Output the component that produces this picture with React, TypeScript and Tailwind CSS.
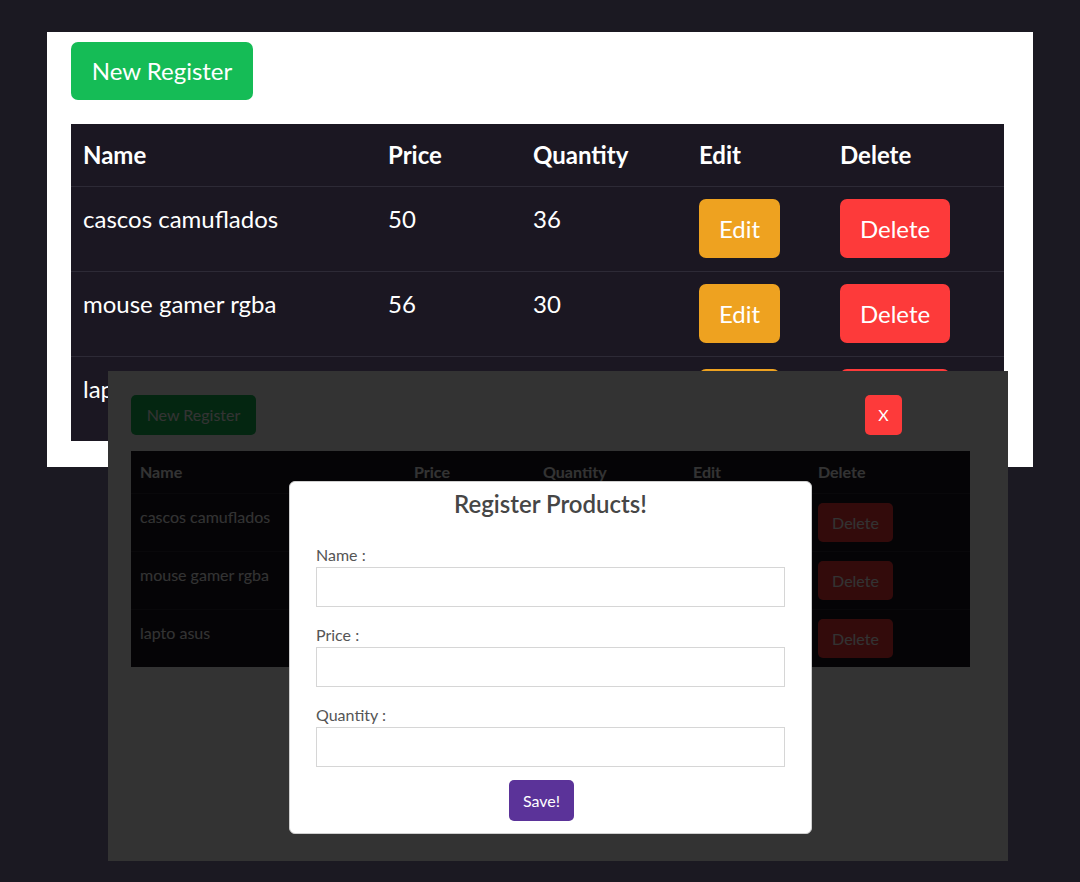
const products = [
  { name: "cascos camuflados", price: 50, quantity: 36 },
  { name: "mouse gamer rgba", price: 56, quantity: 30 },
  { name: "lapto asus", price: 35, quantity: 12 },
];

function BigTable() {
  return (
    <div className="mt-[24px] w-[933px] bg-[#1b1722] text-white">
      <div className="grid grid-cols-[305px_145px_166px_141px_176px] h-[62px] items-center text-[24px] font-bold">
        <div className="px-[12px]">Name</div>
        <div className="px-[12px]">Price</div>
        <div className="px-[12px]">Quantity</div>
        <div className="px-[12px]">Edit</div>
        <div className="px-[12px]">Delete</div>
      </div>
      {products.map((p) => (
        <div
          key={p.name}
          className="grid grid-cols-[305px_145px_166px_141px_176px] h-[85px] items-start pt-[12px] border-t border-[#2d2a36] text-[24px]"
        >
          <div className="px-[12px] leading-[40px]">{p.name}</div>
          <div className="px-[12px] leading-[40px]">{p.price}</div>
          <div className="px-[12px] leading-[40px]">{p.quantity}</div>
          <div className="px-[12px]">
            <button className="w-[81px] h-[59px] rounded-[7px] bg-[#eea220] text-white">Edit</button>
          </div>
          <div className="px-[12px]">
            <button className="w-[110px] h-[59px] rounded-[7px] bg-[#fd3a3a] text-white">Delete</button>
          </div>
        </div>
      ))}
    </div>
  );
}

function SmallTable() {
  return (
    <div className="mt-[16px] w-[839px] bg-[#1b1722] text-white">
      <div className="grid grid-cols-[275px_129px_150px_125px_160px] h-[42px] items-center text-[16px] font-bold">
        <div className="px-[9px]">Name</div>
        <div className="px-[8px]">Price</div>
        <div className="px-[8px]">Quantity</div>
        <div className="px-[8px]">Edit</div>
        <div className="px-[8px]">Delete</div>
      </div>
      {products.map((p) => (
        <div
          key={p.name}
          className="grid grid-cols-[275px_129px_150px_125px_160px] h-[58px] items-start pt-[9px] border-t border-[#2d2a36] text-[16px]"
        >
          <div className="px-[9px] leading-[28px]">{p.name}</div>
          <div className="px-[8px] leading-[28px]">{p.price}</div>
          <div className="px-[8px] leading-[28px]">{p.quantity}</div>
          <div className="px-[8px]">
            <button className="w-[55px] h-[39px] rounded-[5px] bg-[#eea220] text-white">Edit</button>
          </div>
          <div className="px-[8px]">
            <button className="w-[75px] h-[39px] rounded-[5px] bg-[#fd3a3a] text-white">Delete</button>
          </div>
        </div>
      ))}
    </div>
  );
}

function Field({ label }: { label: string }) {
  return (
    <div className="mt-[16px] first:mt-0">
      <div className="text-[16px] leading-[24px] text-[#555555]">{label}</div>
      <input className="w-[469px] h-[40px] border border-[#d6d6d6] bg-white outline-none" />
    </div>
  );
}

export default function App() {
  return (
    <div className="relative w-[1080px] h-[882px] overflow-hidden bg-[#1b1922] pt-[32px] pl-[47px] font-['Lato',sans-serif]">
      {/* first screenshot */}
      <div className="w-[986px] h-[435px] overflow-hidden bg-white pt-[10px] pl-[24px]">
        <button className="w-[182px] h-[58px] rounded-[7px] bg-[#15bc56] text-[24px] text-white">New Register</button>
        <BigTable />
      </div>

      {/* second screenshot, modal open */}
      <div className="absolute left-[108px] top-[371px] w-[900px] h-[490px] overflow-hidden bg-white pt-[24px] pl-[23px]">
        <button className="w-[125px] h-[40px] rounded-[5px] bg-[#15bc56] text-[16px] text-white">New Register</button>
        <SmallTable />

        <div className="absolute inset-0 bg-black/80" />

        <button className="absolute left-[757px] top-[24px] w-[37px] h-[40px] rounded-[5px] bg-[#fd3a3a] text-[16px] text-white">
          X
        </button>

        <div className="absolute left-[181px] top-[110px] w-[523px] h-[353px] rounded-[6px] border border-[#cfcfcf] bg-white px-[26px] pt-[6px]">
          <h2 className="text-center text-[24px] leading-[32px] font-semibold text-[#464646]">Register Products!</h2>
          <form className="mt-[23px]" onSubmit={(e) => e.preventDefault()}>
            <Field label="Name :" />
            <Field label="Price :" />
            <Field label="Quantity :" />
            <button className="mt-[13px] ml-[193px] w-[65px] h-[41px] rounded-[5px] bg-[#5b3399] text-[16px] text-white">
              Save!
            </button>
          </form>
        </div>
      </div>
    </div>
  );
}
